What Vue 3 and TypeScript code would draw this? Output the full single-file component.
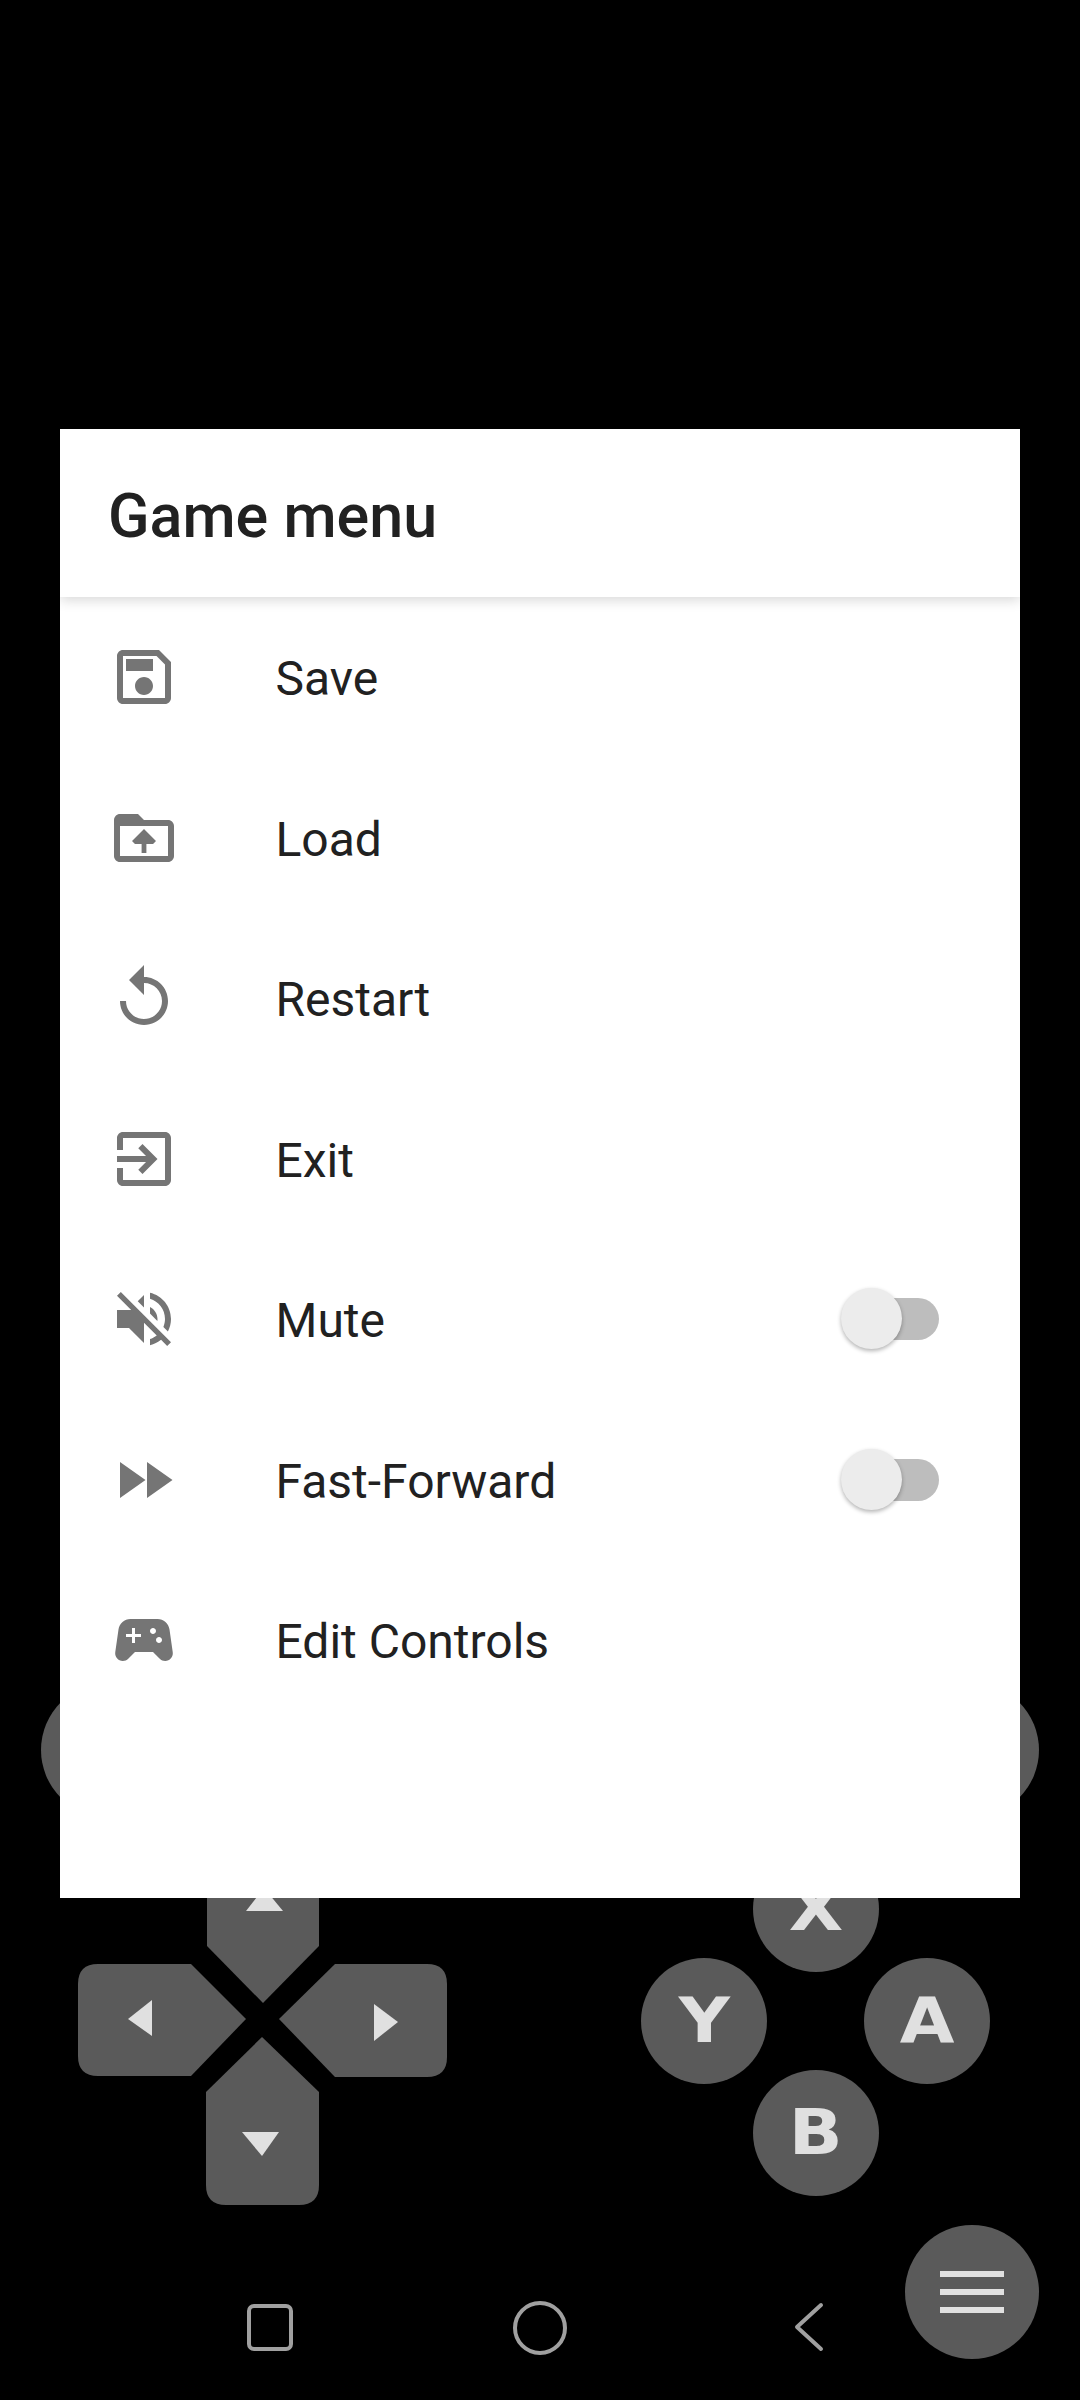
<template>
  <div class="screen">
    <!-- shoulder buttons, half hidden by the dialog -->
    <div class="pad-btn shoulder shoulder-left"></div>
    <div class="pad-btn shoulder shoulder-right"></div>

    <!-- d-pad -->
    <svg class="dpad" viewBox="0 0 369 260" width="369" height="260">
      <path
        d="M129 -12 H241 V46 L185 103 L129 46 Z"
        fill="#5a5a5a"
      />
      <path d="M168 11 L205 11 L186 -12 Z" fill="#e0e0e0" />
      <path
        d="M20 64 H113 L168 119 L113 176 H20 Q0 176 0 156 V84 Q0 64 20 64 Z"
        fill="#5a5a5a"
      />
      <path d="M74 100 L50 119 L74 136 Z" fill="#e0e0e0" />
      <path
        d="M349 64 H257 L201 119 L257 177 H349 Q369 177 369 157 V84 Q369 64 349 64 Z"
        fill="#5a5a5a"
      />
      <path d="M296 104 L320 122 L296 141 Z" fill="#e0e0e0" />
      <path
        d="M184 137 L241 192 V285 Q241 305 221 305 H148 Q128 305 128 285 V192 Z"
        fill="#5a5a5a"
      />
      <path d="M164 232 L201 232 L184 256 Z" fill="#e0e0e0" />
    </svg>

    <!-- face buttons -->
    <div
      v-for="btn in faceButtons"
      :key="btn.label"
      class="pad-btn face"
      :style="{ left: btn.x + 'px', top: btn.y + 'px' }"
    >
      <span class="face-label">{{ btn.label }}</span>
    </div>

    <!-- menu button -->
    <div class="pad-btn menu-btn">
      <span class="menu-line"></span>
      <span class="menu-line"></span>
      <span class="menu-line"></span>
    </div>

    <!-- android nav bar -->
    <div class="nav-square"></div>
    <div class="nav-circle"></div>
    <svg class="nav-back" viewBox="0 0 30 50" width="30" height="50">
      <path d="M27 3 L3 25 L27 47" fill="none" stroke="#a0a0a0" stroke-width="4" stroke-linecap="round" stroke-linejoin="round" />
    </svg>

    <div class="dialog">
      <div class="dialog-header">Game menu</div>
      <div class="dialog-list">
        <div v-for="item in items" :key="item.label" class="row">
          <svg class="row-icon" viewBox="0 0 24 24" width="72" height="72">
            <path :d="item.icon" fill="#757575" />
          </svg>
          <span class="row-label">{{ item.label }}</span>
          <span v-if="item.toggle" class="switch">
            <span class="switch-track"></span>
            <span class="switch-thumb"></span>
          </span>
        </div>
      </div>
    </div>
  </div>
</template>

<script setup lang="ts">
interface MenuItem {
  label: string;
  icon: string;
  toggle?: boolean;
}

const items: MenuItem[] = [
  {
    label: "Save",
    icon: "M17 3H5c-1.11 0-2 .9-2 2v14c0 1.1.89 2 2 2h14c1.1 0 2-.9 2-2V7l-4-4zm2 16H5V5h11.17L19 7.83V19zm-7-7c-1.66 0-3 1.34-3 3s1.34 3 3 3 3-1.34 3-3-1.34-3-3-3zM6 6h9v4H6z",
  },
  {
    label: "Load",
    icon: "M20 6h-8l-2-2H4c-1.1 0-1.99.9-1.99 2L2 18c0 1.1.9 2 2 2h16c1.1 0 2-.9 2-2V8c0-1.1-.9-2-2-2zm0 12H4V8h16v10zM12 9l4 4-1 1h-2.2v3h-1.6v-3H9l-1-1z",
  },
  {
    label: "Restart",
    icon: "M12 5V1L7 6l5 5V7c3.31 0 6 2.69 6 6s-2.69 6-6 6-6-2.69-6-6H4c0 4.42 3.58 8 8 8s8-3.58 8-8-3.58-8-8-8z",
  },
  {
    label: "Exit",
    icon: "M10.09 15.59L11.5 17l5-5-5-5-1.41 1.41L12.67 11H3v2h9.67l-2.58 2.59zM19 3H5c-1.11 0-2 .9-2 2v4h2V5h14v14H5v-4H3v4c0 1.1.89 2 2 2h14c1.1 0 2-.9 2-2V5c0-1.1-.9-2-2-2z",
  },
  {
    label: "Mute",
    icon: "M16.5 12c0-1.77-1.02-3.29-2.5-4.03v2.21l2.45 2.45c.03-.2.05-.41.05-.63zm2.5 0c0 .94-.2 1.82-.54 2.64l1.51 1.51C20.63 14.91 21 13.5 21 12c0-4.28-2.99-7.86-7-8.77v2.06c2.89.86 5 3.54 5 6.71zM4.27 3L3 4.27 7.73 9H3v6h4l5 5v-6.73l4.25 4.25c-.67.52-1.42.93-2.25 1.18v2.06c1.38-.31 2.63-.95 3.69-1.81L19.73 21 21 19.73l-9-9L4.27 3zM12 4L9.91 6.09 12 8.18V4z",
    toggle: true,
  },
  {
    label: "Fast-Forward",
    icon: "M4 18l8.5-6L4 6v12zm9-12v12l8.5-6L13 6z",
    toggle: true,
  },
  {
    label: "Edit Controls",
    icon: "M21.58 16.09l-1.09-7.66C20.21 6.46 18.52 5 16.53 5H7.47C5.48 5 3.79 6.46 3.51 8.43l-1.09 7.66C2.2 17.63 3.39 19 4.94 19c.68 0 1.32-.27 1.8-.75L9 16h6l2.25 2.25c.48.48 1.13.75 1.8.75 1.56 0 2.75-1.37 2.53-2.91zM11 11H9v2H8v-2H6v-1h2V8h1v2h2v1zm4-1c-.55 0-1-.45-1-1s.45-1 1-1 1 .45 1 1-.45 1-1 1zm2 3c-.55 0-1-.45-1-1s.45-1 1-1 1 .45 1 1-.45 1-1 1z",
  },
];

const faceButtons = [
  { label: "X", x: 753, y: 1846 },
  { label: "Y", x: 641, y: 1958 },
  { label: "A", x: 864, y: 1958 },
  { label: "B", x: 753, y: 2070 },
];
</script>

<style scoped>
.screen {
  position: relative;
  width: 1080px;
  height: 2400px;
  background: #000;
  overflow: hidden;
  font-family: Roboto, sans-serif;
}

.pad-btn {
  position: absolute;
  border-radius: 50%;
  background: #5a5a5a;
}

.shoulder {
  width: 134px;
  height: 134px;
  top: 1683px;
}

.shoulder-left {
  left: 41px;
}

.shoulder-right {
  left: 905px;
}

.dpad {
  position: absolute;
  left: 78px;
  top: 1900px;
  overflow: visible;
}

.face {
  width: 126px;
  height: 126px;
  display: flex;
  align-items: center;
  justify-content: center;
  color: #e0e0e0;
  font-family: "DejaVu Sans", sans-serif;
  font-weight: 700;
  font-size: 62px;
  line-height: 1;
}

/* the reference letters are an extended face, so widen ours a bit */
.face-label {
  display: block;
  transform: scaleX(1.14);
}

.menu-btn {
  left: 905px;
  top: 2225px;
  width: 134px;
  height: 134px;
  display: flex;
  flex-direction: column;
  align-items: center;
  justify-content: center;
  gap: 12px;
}

.menu-line {
  width: 64px;
  height: 6px;
  background: #e0e0e0;
}

.nav-square {
  position: absolute;
  left: 247px;
  top: 2304px;
  width: 46px;
  height: 47px;
  box-sizing: border-box;
  border: 4px solid #a0a0a0;
  border-radius: 7px;
}

.nav-circle {
  position: absolute;
  left: 513px;
  top: 2301px;
  width: 54px;
  height: 54px;
  box-sizing: border-box;
  border: 4px solid #a0a0a0;
  border-radius: 50%;
}

.nav-back {
  position: absolute;
  left: 794px;
  top: 2302px;
}

.dialog {
  position: absolute;
  left: 60px;
  top: 429px;
  width: 960px;
  height: 1469px;
  background: #fff;
  display: flex;
  flex-direction: column;
}

.dialog-header {
  height: 168px;
  box-sizing: border-box;
  padding: 6px 0 0 48px;
  display: flex;
  align-items: center;
  font-size: 61px;
  font-weight: 500;
  color: #212121;
  box-shadow: 0 3px 12px rgba(0, 0, 0, 0.16);
}

.row {
  height: 160.5px;
  padding: 0 81px 0 48px;
  display: flex;
  align-items: center;
}

.row-icon {
  flex: none;
}

.row-label {
  margin-left: 95.5px;
  padding-top: 3px;
  flex: 1;
  font-size: 48px;
  color: #212121;
}

.switch {
  position: relative;
  flex: none;
  width: 98px;
  height: 62px;
}

.switch-track {
  position: absolute;
  right: 0;
  top: 10px;
  width: 90px;
  height: 42px;
  border-radius: 21px;
  background: #bdbdbd;
}

.switch-thumb {
  position: absolute;
  left: 0;
  top: 0;
  width: 61px;
  height: 61px;
  border-radius: 50%;
  background: #ececec;
  box-shadow: 0 2px 4px rgba(0, 0, 0, 0.3);
}
</style>
